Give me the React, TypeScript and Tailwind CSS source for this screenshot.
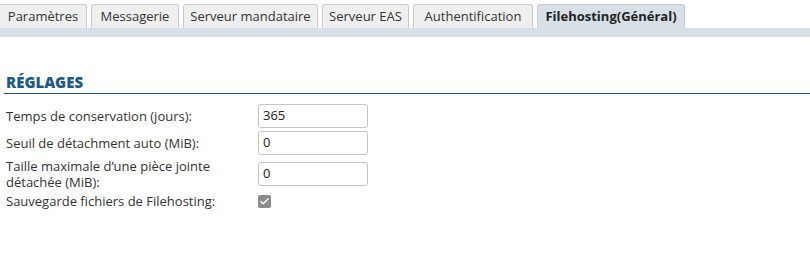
import { Check } from 'lucide-react'

const tabs = [
  { label: 'Paramètres', w: 'w-[87px]' },
  { label: 'Messagerie', w: 'w-[88px]' },
  { label: 'Serveur mandataire', w: 'w-[135px]' },
  { label: 'Serveur EAS', w: 'w-[87px]' },
  { label: 'Authentification', w: 'w-[120px]' },
]

function Field({ label, value }: { label: React.ReactNode; value: string }) {
  return (
    <div className="flex items-center">
      <div className="w-[252px] text-[13px] leading-[16px] text-[#333]">{label}</div>
      <div className="w-[110px] h-[24px] border border-[#c4c4c4] rounded-[3px] bg-white flex items-center px-[4px] text-[13px] text-[#222]">
        {value}
      </div>
    </div>
  )
}

export default function App() {
  return (
    <div className="w-[810px] h-[256px] bg-white font-['Open_Sans',sans-serif] overflow-hidden">
      <div className="flex items-end gap-[4px] pt-[4px] h-[28px]">
        {tabs.map((t) => (
          <div
            key={t.label}
            className={`${t.w} h-[24px] flex items-center justify-center bg-[#efefef] border border-b-0 border-[#cbcbcb] rounded-t-[3px] text-[13px] text-[#333] first:rounded-tl-none first:border-l-0`}
          >
            {t.label}
          </div>
        ))}
        <div className="w-[148px] h-[24px] flex items-center justify-center bg-[#d6e0e6] border border-b-0 border-[#cbcbcb] rounded-t-[3px] text-[13px] font-bold text-[#222]">
          Filehosting(Général)
        </div>
      </div>
      <div className="h-[9px] bg-[#d6e0e6]" />

      <div className="pl-[4px] pt-[36px]">
        <div className="border-b border-[#1f5a87] pb-[2px]">
          <h2 className="pl-[2px] text-[15px] font-extrabold text-[#1f5a87] leading-[18px]">RÉGLAGES</h2>
        </div>
        <div className="pl-[2px] pt-[10px] flex flex-col gap-[3px]">
          <Field label="Temps de conservation (jours):" value="365" />
          <Field label="Seuil de détachment auto (MiB):" value="0" />
          <Field
            label={
              <>
                Taille maximale d’une pièce jointe
                <br />
                détachée (MiB):
              </>
            }
            value="0"
          />
          <div className="flex items-center">
            <div className="w-[252px] text-[13px] leading-[16px] text-[#333]">Sauvegarde fichiers de Filehosting:</div>
            <span className="w-[13px] h-[13px] rounded-[2px] bg-[#8c8c8c] flex items-center justify-center">
              <Check size={11} strokeWidth={3} className="text-white" />
            </span>
          </div>
        </div>
      </div>
    </div>
  )
}
